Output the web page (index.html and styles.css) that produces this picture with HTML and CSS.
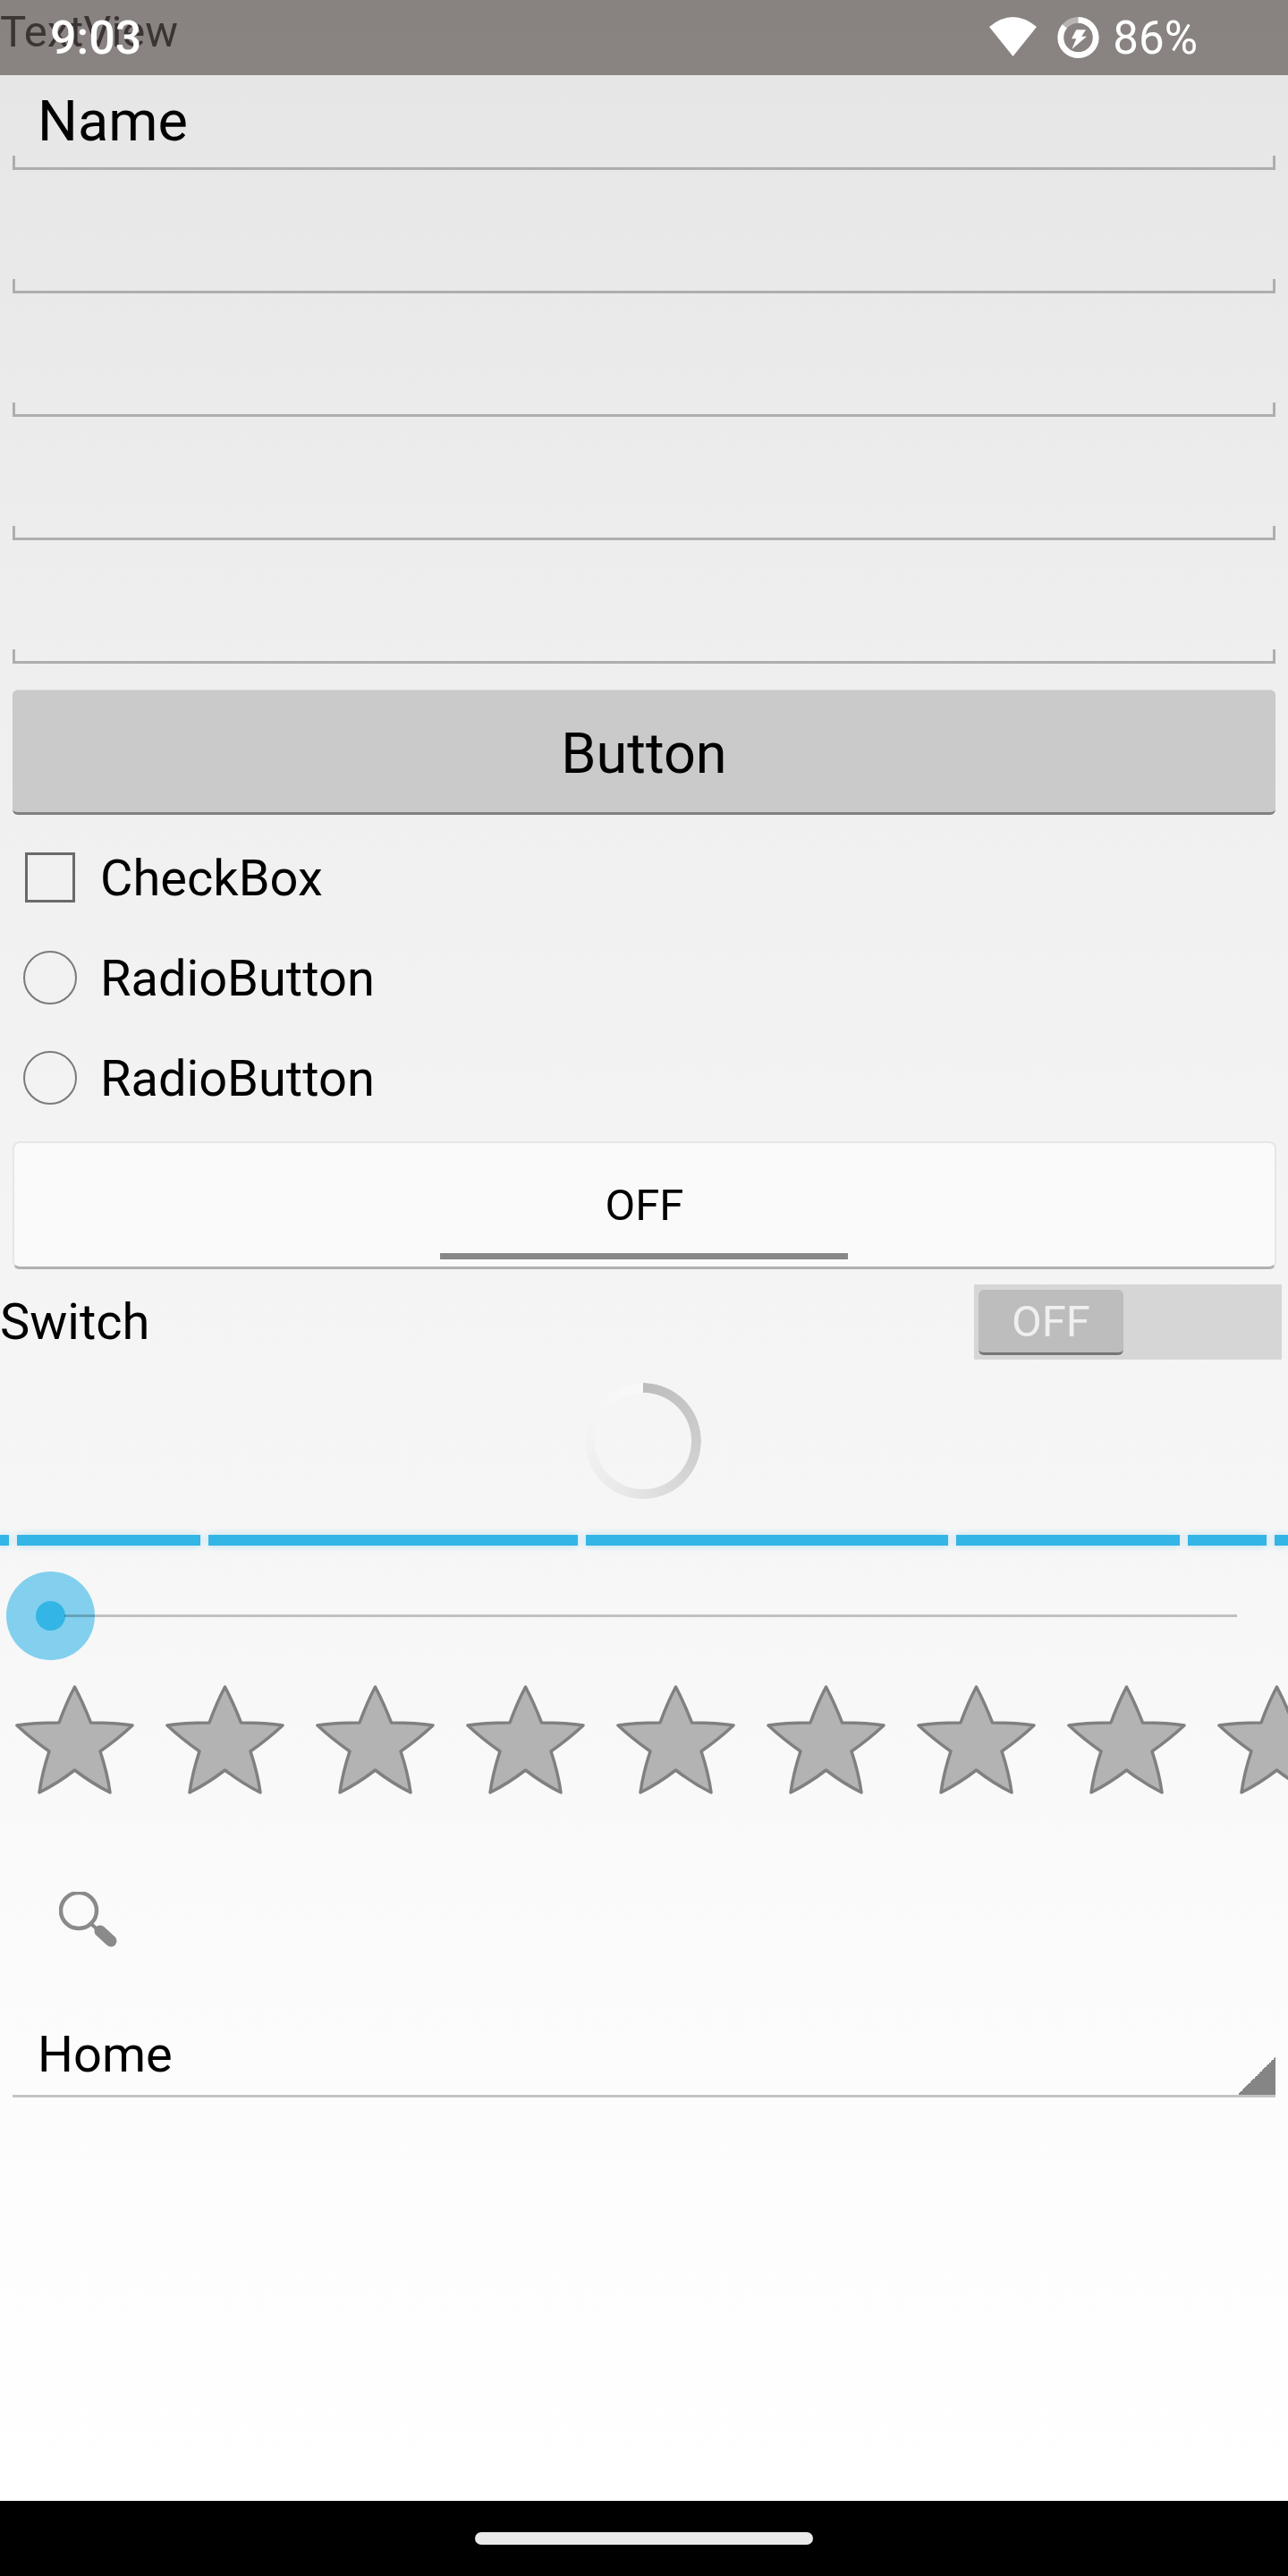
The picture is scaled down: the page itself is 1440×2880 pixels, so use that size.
FILE: index.html
```html
<!DOCTYPE html>
<html lang="en">
  <head>
    <meta charset="UTF-8" />
    <meta name="viewport" content="width=device-width, initial-scale=1.0" />
    <title>Widgets</title>
    <link rel="stylesheet" href="styles.css">
  </head>
  <body>
    <div class="statusbar">
      <span class="clock">9:03</span>
      <div class="status-right">
        <svg class="wifi" viewBox="0 0 54 46"><path d="M0 11 Q26.5 -11 53 11 L26.5 44 Z" /></svg>
        <svg class="battery" viewBox="0 0 48 48">
          <circle class="battery-rest" cx="23.5" cy="24" r="19.7" />
          <circle class="battery-level" cx="23.5" cy="24" r="19.7" pathLength="100" transform="rotate(-90 23.5 24)" />
          <polygon class="battery-bolt" points="21.3,15.3 32,15.3 27.3,22.7 33,22.7 16.3,37 21.3,25.3 16,25.3" />
        </svg>
        <span class="percent">86%</span>
      </div>
    </div>

    <main>
      <p class="textview">TextView</p>

      <div class="field field-first">Name</div>
      <div class="field"></div>
      <div class="field"></div>
      <div class="field"></div>
      <div class="field"></div>

      <button class="knap">Button</button>

      <div class="choice"><span class="box"></span>CheckBox</div>
      <div class="choice"><span class="box radio"></span>RadioButton</div>
      <div class="choice"><span class="box radio"></span>RadioButton</div>

      <div class="toggle">
        <span>OFF</span>
        <span class="toggle-line"></span>
      </div>

      <div class="switch-row">
        <span>Switch</span>
        <div class="switch-track"><span class="switch-thumb">OFF</span></div>
      </div>

      <div class="spinner"></div>

      <div class="progress">
        <span class="seg s1"></span>
        <span class="seg s2"></span>
        <span class="seg s3"></span>
        <span class="seg s4"></span>
        <span class="seg s5"></span>
        <span class="seg s6"></span>
        <span class="seg s7"></span>
      </div>

      <div class="seek">
        <span class="halo"><span class="dot"></span></span>
        <span class="seek-line"></span>
      </div>

      <div class="stars">
        <svg class="star" viewBox="0 0 168 124"><use href="#star-shape" /></svg>
        <svg class="star" viewBox="0 0 168 124"><use href="#star-shape" /></svg>
        <svg class="star" viewBox="0 0 168 124"><use href="#star-shape" /></svg>
        <svg class="star" viewBox="0 0 168 124"><use href="#star-shape" /></svg>
        <svg class="star" viewBox="0 0 168 124"><use href="#star-shape" /></svg>
        <svg class="star" viewBox="0 0 168 124"><use href="#star-shape" /></svg>
        <svg class="star" viewBox="0 0 168 124"><use href="#star-shape" /></svg>
        <svg class="star" viewBox="0 0 168 124"><use href="#star-shape" /></svg>
        <svg class="star" viewBox="0 0 168 124"><use href="#star-shape" /></svg>
      </div>

      <svg class="search" viewBox="0 0 66 66">
        <circle cx="22" cy="21" r="20" />
        <line class="search-neck" x1="36" y1="36" x2="46" y2="45" />
        <line class="search-grip" x1="46" y1="44" x2="58" y2="55" />
      </svg>

      <div class="dropdown">
        <span>Home</span>
        <span class="dropdown-arrow"></span>
      </div>
    </main>

    <div class="navbar"><span class="pill"></span></div>

    <svg class="defs" width="0" height="0">
      <defs>
        <path id="star-shape" d="M83.5 2 Q93 20 101.5 42 Q130 42 148 45 Q132 60 112 74 Q120 98 123 120 Q103 110 83.5 95 Q64 110 44 120 Q47 98 55 74 Q35 60 19 45 Q37 42 66 42 Q74 20 83.5 2 Z" />
      </defs>
    </svg>
  </body>
</html>
```

FILE: styles.css
```css
* {
  box-sizing: border-box;
  margin: 0;
  padding: 0;
}

html,
body {
  height: 2880px;
  overflow: hidden;
}

body {
  display: flex;
  flex-direction: column;
  font-family: Roboto, "Liberation Sans", sans-serif;
  color: #000;
  background: #fff;
}

main {
  flex: 1;
  overflow: hidden;
  background: linear-gradient(#e5e5e5, #efefef 27%, #f3f3f3 45%, #f6f6f6 61%, #fbfbfb 78%, #fff);
}

/* status bar lies over the TextView */
.statusbar {
  position: absolute;
  top: 0;
  left: 0;
  width: 1440px;
  height: 84px;
  display: flex;
  justify-content: space-between;
  align-items: center;
  padding: 0 101px 0 56px;
  background: rgba(88, 80, 76, 0.66);
  color: #fff;
  font-size: 49px;
}

.clock {
  font-size: 52px;
  font-weight: 500;
}

.status-right {
  display: flex;
  align-items: center;
}

.wifi {
  width: 54px;
  height: 46px;
  fill: #fff;
}

.battery {
  width: 48px;
  height: 48px;
  margin-left: 22px;
}

.battery circle {
  fill: none;
  stroke-width: 6.7;
}

.battery-rest {
  stroke: rgba(255, 255, 255, 0.4);
}

.battery-level {
  stroke: #fff;
  stroke-dasharray: 86 14;
}

.battery-bolt {
  fill: #fff;
}

.percent {
  margin-left: 14px;
  font-size: 51px;
}

.textview {
  height: 52px;
  padding-top: 7px;
  font-size: 49px;
  line-height: 58px;
  color: #000;
}

.field {
  position: relative;
  height: 138px;
  margin: 0 14px;
  padding: 0 28px 14px;
  display: flex;
  align-items: flex-end;
  font-size: 63px;
  line-height: 74px;
  border-bottom: 3px solid #aeaeae;
}

.field::before,
.field::after {
  content: "";
  position: absolute;
  bottom: 0;
  width: 3px;
  height: 13px;
  background: #aeaeae;
}

.field::before {
  left: 0;
}

.field::after {
  right: 0;
}

.knap {
  display: block;
  width: 1412px;
  height: 140px;
  margin: 29px 14px 0;
  padding-top: 4px;
  border: 0;
  border-top: 1px solid #d6d6d6;
  border-bottom: 3px solid #808080;
  border-radius: 6px;
  background: #cacaca;
  font: inherit;
  font-size: 63px;
  color: #000;
}

.choice {
  height: 112px;
  display: flex;
  align-items: center;
  padding-left: 28px;
  padding-top: 2px;
  font-size: 56px;
}

.knap + .choice {
  margin-top: 14px;
}

.box {
  width: 56px;
  height: 56px;
  margin-right: 28px;
  margin-top: -2px;
  border: 3px solid #6a6a6a;
}

.radio {
  width: 60px;
  height: 60px;
  margin-left: -2px;
  margin-right: 26px;
  border-width: 2.5px;
  border-color: #7a7a7a;
  border-radius: 50%;
}

.toggle {
  position: relative;
  height: 143px;
  margin: 15px 13px 0 14px;
  display: flex;
  align-items: center;
  justify-content: center;
  font-size: 49px;
  background: #fafafa;
  border: 2px solid #e6e6e6;
  border-bottom: 3px solid #b0b0b0;
  border-radius: 8px;
}

.toggle-line {
  position: absolute;
  left: 476px;
  bottom: 8px;
  width: 456px;
  height: 7px;
  background: #888;
}

.switch-row {
  height: 84px;
  margin-top: 17px;
  display: flex;
  justify-content: space-between;
  align-items: center;
  padding-right: 7px;
  font-size: 56px;
}

.switch-track {
  width: 344px;
  height: 84px;
  padding: 6px 5px 5px;
  background: #d6d6d6;
}

.switch-thumb {
  display: flex;
  align-items: center;
  justify-content: center;
  width: 162px;
  height: 73px;
  background: #bdbdbd;
  border-bottom: 3px solid #767676;
  border-radius: 6px;
  font-size: 49px;
  color: #efefef;
}

.spinner {
  width: 130px;
  height: 130px;
  margin: 26px auto 0;
  transform: translateX(-1px);
  border-radius: 50%;
  background: conic-gradient(#bdbdbd, #d2d2d2 120deg, #e8e8e8 200deg, #f3f3f3 270deg, #f9f9f9 360deg);
  -webkit-mask: radial-gradient(circle, transparent 53.5px, #000 54.5px, #000 64.5px, transparent 65.5px);
  mask: radial-gradient(circle, transparent 53.5px, #000 54.5px, #000 64.5px, transparent 65.5px);
}

.progress {
  display: flex;
  gap: 9px;
  margin-top: 40px;
}

.seg {
  display: block;
  height: 12px;
  background: #33b5e5;
  box-shadow: 0 0 8px rgba(51, 181, 229, 0.35);
}

.s1 { width: 10px; }
.s2 { width: 205px; }
.s3 { width: 413px; }
.s4 { width: 405px; }
.s5 { width: 250px; }
.s6 { width: 88px; }
.s7 { width: 15px; }

.seek {
  height: 99px;
  margin-top: 29px;
  display: flex;
  align-items: center;
  padding-left: 7px;
}

.halo {
  flex-shrink: 0;
  width: 99px;
  height: 99px;
  display: flex;
  align-items: center;
  justify-content: center;
  border-radius: 50%;
  background: #82d0ee;
}

.dot {
  width: 33px;
  height: 33px;
  border-radius: 50%;
  background: #33b5e5;
}

.seek-line {
  width: 1311px;
  height: 3px;
  margin-left: -34px;
  background: rgba(0, 0, 0, 0.22);
}

.stars {
  display: flex;
  margin-top: 28px;
}

.star {
  flex-shrink: 0;
  width: 168px;
  height: 124px;
  fill: #b3b3b3;
  stroke: #808080;
  stroke-width: 3.5;
  stroke-linejoin: round;
}

.search {
  display: block;
  width: 66px;
  height: 66px;
  margin: 107px 0 0 66px;
}

.search circle {
  fill: none;
  stroke: #8a8a8a;
  stroke-width: 4.5;
}

.search-neck {
  stroke: #8a8a8a;
  stroke-width: 4;
}

.search-grip {
  stroke: #8a8a8a;
  stroke-width: 13;
  stroke-linecap: round;
}

.dropdown {
  position: relative;
  height: 126px;
  margin: 38px 14px 0;
  padding: 0 28px 12px;
  display: flex;
  align-items: flex-end;
  font-size: 56px;
  line-height: 66px;
  border-bottom: 3px solid #c4c4c4;
}

.dropdown-arrow {
  position: absolute;
  right: 0;
  bottom: 0;
  width: 42px;
  height: 42px;
  background: linear-gradient(135deg, transparent 50%, #858585 50%);
}

.navbar {
  height: 84px;
  flex-shrink: 0;
  display: flex;
  justify-content: center;
  padding-top: 35px;
  background: #000;
}

.pill {
  width: 378px;
  height: 14px;
  border-radius: 7px;
  background: #e9e9e9;
}

.defs {
  position: absolute;
}
```
